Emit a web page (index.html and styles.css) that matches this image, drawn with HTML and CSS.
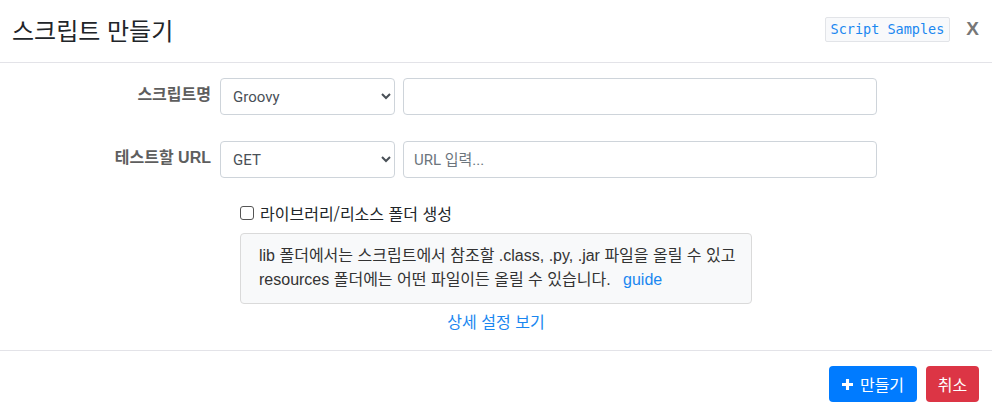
FILE: index.html
```html
<!DOCTYPE html>
<html lang="ko">
<head>
<meta charset="utf-8">
<title>스크립트 만들기</title>
<link rel="stylesheet" href="styles.css">
</head>
<body>
<div class="modal">
  <div class="modal-header">
    <h4 class="modal-title">스크립트 만들기</h4>
    <div class="header-tools">
      <code class="samples">Script Samples</code>
      <span class="close">X</span>
    </div>
  </div>
  <div class="modal-body">
    <div class="form-row">
      <label class="row-label">스크립트명</label>
      <select class="control select"><option>Groovy</option></select>
      <input class="control input" type="text">
    </div>
    <div class="form-row">
      <label class="row-label">테스트할 URL</label>
      <select class="control select"><option>GET</option></select>
      <input class="control input" type="text" placeholder="URL 입력...">
    </div>
    <div class="extra">
      <label class="check"><span class="box"></span>라이브러리/리소스 폴더 생성</label>
      <div class="info">
        lib 폴더에서는 스크립트에서 참조할 .class, .py, .jar 파일을 올릴 수 있고<br>
        resources 폴더에는 어떤 파일이든 올릴 수 있습니다. <a class="link guide">guide</a>
      </div>
      <a class="link more">상세 설정 보기</a>
    </div>
  </div>
  <div class="modal-footer">
    <button class="btn btn-primary"><svg class="plus" viewBox="0 0 10 10" width="11" height="11"><path d="M3.6 0h2.8v3.6H10v2.8H6.4V10H3.6V6.4H0V3.6h3.6z" fill="#fff"/></svg>만들기</button>
    <button class="btn btn-danger">취소</button>
  </div>
</div>
</body>
</html>
```
FILE: styles.css
```css
* { box-sizing: border-box; }
body {
  margin: 0;
  background: #fff;
  font-family: "Liberation Sans", "Noto Sans CJK KR", sans-serif;
  color: #212529;
}
.modal { width: 992px; }
.modal-header {
  height: 63px;
  border-bottom: 1px solid #e3e3e8;
  display: flex;
  align-items: center;
  justify-content: space-between;
  padding: 0 13px 0 12px;
}
.modal-title {
  margin: 0;
  font-size: 24px;
  font-weight: 400;
  line-height: 30px;
  color: #212529;
  font-family: "Noto Sans CJK KR", sans-serif;
  margin-top: -2px;
}
.header-tools { display: flex; align-items: center; gap: 16px; margin-top: -4px; }
.samples {
  font-family: "DejaVu Sans Mono", monospace;
  font-size: 13.5px;
  color: #1a87f0;
  background: #f8f9fb;
  border: 1px solid #e2e4e8;
  border-radius: 2px;
  padding: 2px 5px 3px 5px;
  line-height: 18px;
}
.close {
  font-family: "Liberation Sans", sans-serif;
  font-weight: 700;
  font-size: 19px;
  color: #777;
  line-height: 20px;
}
.modal-body { padding: 15px 0 17px 0; }
.form-row {
  display: flex;
  align-items: center;
  gap: 8px;
  margin-bottom: 26px;
}
.row-label {
  width: 212px;
  text-align: right;
  font-size: 16px;
  font-weight: 700;
  color: #5e5e5e;
  padding-right: 1px;
  margin-top: -8px;
}
.control {
  height: 37px;
  border: 1px solid #ced4da;
  border-radius: 4px;
  font-family: "Roboto", "Noto Sans CJK KR", sans-serif;
  font-size: 15px;
  color: #495057;
  background: #fff;
  padding: 0 10px;
}
.select { width: 175px; padding: 0 8px; }
.input { width: 474px; }
.input::placeholder { color: #6c757d; }
.extra {
  margin-left: 240px;
  width: 512px;
  display: flex;
  flex-direction: column;
  margin-top: -3px;
}
.check {
  display: flex;
  align-items: center;
  font-size: 16px;
  color: #212529;
  line-height: 24px;
  font-family: "Noto Sans CJK KR", sans-serif;
}
.box {
  width: 14px;
  height: 14px;
  border: 1px solid #555;
  border-radius: 3px;
  margin: 0 6px 0 0;
  background: #fff;
}
.info {
  margin-top: 8px;
  background: #f8f9fa;
  border: 1px solid #dadada;
  border-radius: 4px;
  padding: 10px 14px 11px 18px;
  font-size: 16px;
  line-height: 24px;
  color: #333;
  white-space: nowrap;
}
.link { color: #1a87f0; text-decoration: none; }
.guide { margin-left: 8px; }
.more {
  align-self: center;
  margin-top: 5px;
  font-size: 16px;
  line-height: 24px;
  font-family: "Noto Sans CJK KR", sans-serif;
}
.modal-footer {
  border-top: 1px solid #e3e3e8;
  display: flex;
  justify-content: flex-end;
  gap: 9px;
  padding: 15px 13px 10px 0;
}
.btn {
  height: 36px;
  border: none;
  border-radius: 4px;
  color: #fff;
  font-size: 16px;
  font-family: "Noto Sans CJK KR", sans-serif;
  padding: 0;
  display: flex;
  align-items: center;
  justify-content: center;
  gap: 7px;
  white-space: nowrap;
}
.btn-primary { background: #007bff; width: 88px; }
.btn-danger { background: #dc3545; width: 53px; }
```
